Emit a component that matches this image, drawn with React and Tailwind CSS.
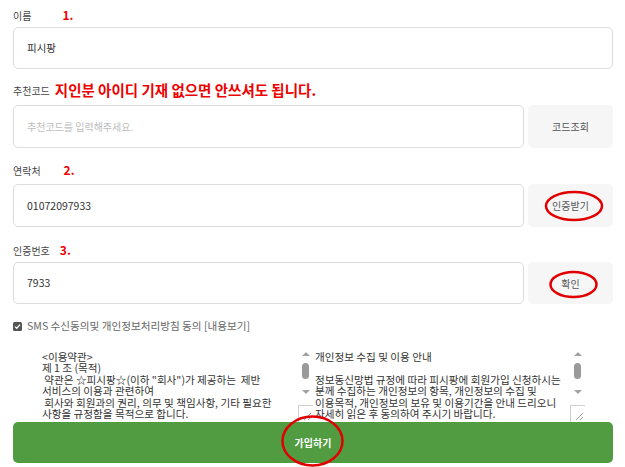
import React from 'react';

const font = { fontFamily: '"Noto Sans CJK KR", "Noto Sans", sans-serif' };

function Scrollbar() {
  return (
    <div className="absolute right-0 top-0 bottom-0 w-[15px] flex flex-col items-center">
      <div className="mt-[7px] w-0 h-0 border-l-[4px] border-r-[4px] border-b-[4px] border-l-transparent border-r-transparent border-b-[#a3a3a3]" />
      <div className="mt-[7px] w-[7px] h-[16px] rounded-full bg-[#9a9a9a]" />
      <div className="mt-[11px] w-0 h-0 border-l-[4px] border-r-[4px] border-t-[4px] border-l-transparent border-r-transparent border-t-[#a3a3a3]" />
      <div className="mt-[11px] w-[15px] h-[17px] border-l border-t border-[#cfcfcf] bg-white relative">
        <svg width="15" height="17" className="absolute left-0 top-0">
          <line x1="5" y1="14" x2="12" y2="7" stroke="#888" strokeWidth="0.8" />
          <line x1="9" y1="14" x2="12" y2="11" stroke="#888" strokeWidth="0.8" />
        </svg>
      </div>
    </div>
  );
}

function Field({ label, mark, value, placeholder, button, labelClass, inputH }) {
  return (
    <div className="flex flex-col">
      <div className={`flex items-center ${labelClass}`}>
        <span className="text-[10px] text-[#444]">{label}</span>
        {mark}
      </div>
      <div className="flex gap-[4px]">
        <div className={`flex-1 ${inputH} border border-[#dcdcdc] rounded-[5px] bg-white flex items-center px-[13px]`}>
          {value ? (
            <span className="text-[10.5px] text-[#333]">{value}</span>
          ) : (
            <span className="text-[10px] text-[#bdbdbd]">{placeholder}</span>
          )}
        </div>
        {button && (
          <div className={`w-[85px] ${inputH} rounded-[5px] bg-[#f6f6f6] flex items-center justify-center`}>
            <span className="text-[10px] text-[#555]">{button}</span>
          </div>
        )}
      </div>
    </div>
  );
}

export default function App() {
  const left = [
    '<이용약관>',
    '제 1 조 (목적)',
    '\u00a0약관은 ☆피시팡☆(이하 "회사")가 제공하는\u00a0\u00a0제반',
    '서비스의 이용과 관련하여',
    '\u00a0회사와 회원과의 권리, 의무 및 책임사항, 기타 필요한',
    '사항을 규정함을 목적으로 합니다.',
  ];
  const right = [
    '개인정보 수집 및 이용 안내',
    '\u00a0',
    '정보동신망법 규정에 따라 피시팡에 회원가입 신청하시는',
    '분께 수집하는 개인정보의 항목, 개인정보의 수집 및',
    '이용목적, 개인정보의 보유 및 이용기간을 안내 드리오니',
    '자세히 읽은 후 동의하여 주시기 바랍니다.',
  ];

  return (
    <div className="relative w-[625px] h-[467px] overflow-hidden bg-white" style={font}>
      <div className="flex flex-col pl-[13px] pr-[12px] pt-[3px]">
        <Field
          label="이름"
          labelClass="h-[24px]"
          inputH="h-[42px]"
          value="피시팡"
          mark={<span className="ml-[31px] text-[12px] font-bold text-[#e00]">1.</span>}
        />
        <Field
          label="추천코드"
          labelClass="h-[36px] pt-[6px]"
          inputH="h-[43px]"
          placeholder="추천코드를 입력해주세요."
          button="코드조회"
          mark={<span className="ml-[5px] text-[14.5px] font-bold text-[#e00]">지인분 아이디 기재 없으면 안쓰셔도 됩니다.</span>}
        />
        <Field
          label="연락처"
          labelClass="h-[36px] pt-[8px]"
          inputH="h-[43px]"
          value="01072097933"
          button="인증받기"
          mark={<span className="ml-[23px] text-[12px] font-bold text-[#e00]">2.</span>}
        />
        <Field
          label="인증번호"
          labelClass="h-[35px] pt-[11px]"
          inputH="h-[42px]"
          value="7933"
          button="확인"
          mark={<span className="ml-[10px] text-[12px] font-bold text-[#e00]">3.</span>}
        />

        <div className="h-[41px] pt-[3px] flex items-center gap-[5px]">
          <svg width="9" height="9" viewBox="0 0 9 9">
            <rect x="0" y="0" width="9" height="9" rx="1.5" fill="#555" />
            <path d="M2 4.6 L3.8 6.3 L7 2.6" stroke="#fff" strokeWidth="1.3" fill="none" />
          </svg>
          <span className="text-[10.6px] text-[#666]">SMS 수신동의및 개인정보처리방침 동의 [내용보기]</span>
        </div>

        <div className="h-[77px] flex pl-[25px] overflow-hidden">
          <div className="relative w-[275px] h-[77px] pl-[4px] pt-[6px]">
            {left.map((t, i) => (
              <div key={i} className="text-[10.6px] leading-[11.4px] text-[#333] whitespace-pre">{t}</div>
            ))}
            <Scrollbar />
          </div>
          <div className="relative w-[272px] h-[77px] pl-[2px] pt-[6px]">
            {right.map((t, i) => (
              <div key={i} className="text-[10.6px] leading-[11.4px] text-[#333] whitespace-pre">{t}</div>
            ))}
            <Scrollbar />
          </div>
        </div>

        <div className="h-[41px] rounded-[5px] bg-[#519b41] flex items-center justify-center">
          <span className="text-[10px] font-bold text-white">가입하기</span>
        </div>
      </div>

      <svg className="absolute left-0 top-0 pointer-events-none" width="625" height="467">
        <ellipse cx="574" cy="206" rx="28" ry="14" fill="none" stroke="#e00000" strokeWidth="2.5" />
        <ellipse cx="573.5" cy="284.5" rx="23" ry="12.5" fill="none" stroke="#e00000" strokeWidth="2.5" />
        <ellipse cx="312.5" cy="441" rx="30" ry="24.5" fill="none" stroke="#e00000" strokeWidth="2.5" />
      </svg>
    </div>
  );
}
